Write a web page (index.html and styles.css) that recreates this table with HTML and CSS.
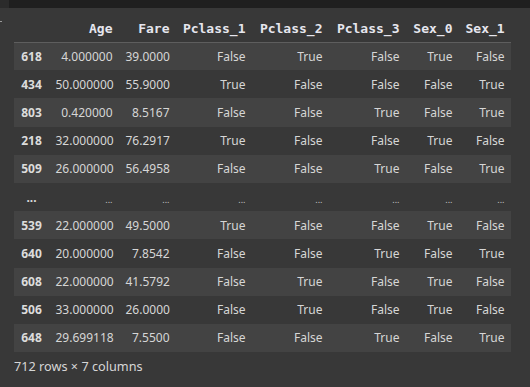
FILE: index.html
```html
<!DOCTYPE html>
<html>
<head>
<meta charset="utf-8">
<link rel="stylesheet" href="styles.css">
</head>
<body>
<div class="topbar"><div class="topbar-left"></div><div class="topbar-main"></div></div>
<div class="output">
  <div class="gutter"><span class="mark"></span></div>
  <div class="content">
    <table class="dataframe">
      <colgroup>
        <col class="c-idx"><col class="c-age"><col class="c-fare"><col class="c-p1"><col class="c-p2"><col class="c-p3"><col class="c-s0"><col class="c-s1">
      </colgroup>
      <thead>
        <tr><th></th><th>Age</th><th>Fare</th><th>Pclass_1</th><th>Pclass_2</th><th>Pclass_3</th><th>Sex_0</th><th>Sex_1</th></tr>
      </thead>
      <tbody>
        <tr><th>618</th><td>4.000000</td><td>39.0000</td><td>False</td><td>True</td><td>False</td><td>True</td><td>False</td></tr>
        <tr><th>434</th><td>50.000000</td><td>55.9000</td><td>True</td><td>False</td><td>False</td><td>False</td><td>True</td></tr>
        <tr><th>803</th><td>0.420000</td><td>8.5167</td><td>False</td><td>False</td><td>True</td><td>False</td><td>True</td></tr>
        <tr><th>218</th><td>32.000000</td><td>76.2917</td><td>True</td><td>False</td><td>False</td><td>True</td><td>False</td></tr>
        <tr><th>509</th><td>26.000000</td><td>56.4958</td><td>False</td><td>False</td><td>True</td><td>False</td><td>True</td></tr>
        <tr class="ellipsis"><th>...</th><td>...</td><td>...</td><td>...</td><td>...</td><td>...</td><td>...</td><td>...</td></tr>
        <tr><th>539</th><td>22.000000</td><td>49.5000</td><td>True</td><td>False</td><td>False</td><td>True</td><td>False</td></tr>
        <tr><th>640</th><td>20.000000</td><td>7.8542</td><td>False</td><td>False</td><td>True</td><td>False</td><td>True</td></tr>
        <tr><th>608</th><td>22.000000</td><td>41.5792</td><td>False</td><td>True</td><td>False</td><td>True</td><td>False</td></tr>
        <tr><th>506</th><td>33.000000</td><td>26.0000</td><td>False</td><td>True</td><td>False</td><td>True</td><td>False</td></tr>
        <tr><th>648</th><td>29.699118</td><td>7.5500</td><td>False</td><td>False</td><td>True</td><td>False</td><td>True</td></tr>
      </tbody>
    </table>
    <p class="shape">712 rows × 7 columns</p>
  </div>
</div>
</body>
</html>
```

FILE: styles.css
```css
html, body {
  margin: 0;
  padding: 0;
  background: #383838;
  width: 530px;
  height: 387px;
  overflow: hidden;
}

body {
  font-family: "Noto Sans", "Liberation Sans", sans-serif;
  color: #d6d6d6;
}

.topbar {
  display: flex;
  height: 8px;
}

.topbar-left {
  width: 9px;
  background: #2b2b2b;
}

.topbar-main {
  flex: 1;
  background: #1f1f1f;
}

.output {
  display: flex;
}

.gutter {
  width: 14px;
  flex: none;
  position: relative;
}

.mark {
  position: absolute;
  left: 0;
  top: 13px;
  width: 2px;
  height: 1px;
  background: #9a9a9a;
}

.content {
  padding-top: 6px;
}

.dataframe {
  border-collapse: collapse;
  table-layout: fixed;
  width: 497px;
  font-size: 12px;
}

.c-idx { width: 35px; }
.c-age { width: 70px; }
.c-fare { width: 57px; }
.c-p1 { width: 76px; }
.c-p2 { width: 77px; }
.c-p3 { width: 77px; }
.c-s0 { width: 53px; }
.c-s1 { width: 52px; }

.dataframe th,
.dataframe td {
  padding: 0 6.5px;
  text-align: right;
  white-space: nowrap;
  overflow: visible;
}

.dataframe thead tr {
  height: 28px;
  border-bottom: 1px solid #5e5e5e;
}

.dataframe thead th {
  font-family: "DejaVu Sans Mono", "Liberation Mono", monospace;
  font-weight: bold;
  font-size: 13px;
  color: #e6e6ee;
  vertical-align: middle;
  padding-top: 1px;
}

.dataframe tbody tr {
  height: 28.2px;
}

.dataframe tbody tr:nth-child(odd) {
  background: #434343;
}

.dataframe tbody th {
  font-weight: bold;
  text-align: center;
  color: #dcdcdc;
}

.ellipsis td {
  font-size: 9px;
  color: #c4c4c4;
  vertical-align: middle;
  padding-top: 4px;
}

.ellipsis th {
  font-size: 12px;
  vertical-align: middle;
  padding-top: 1px;
}

.shape {
  margin: 5px 0 0 0;
  font-size: 12.7px;
  color: #d6d6d6;
}
```
